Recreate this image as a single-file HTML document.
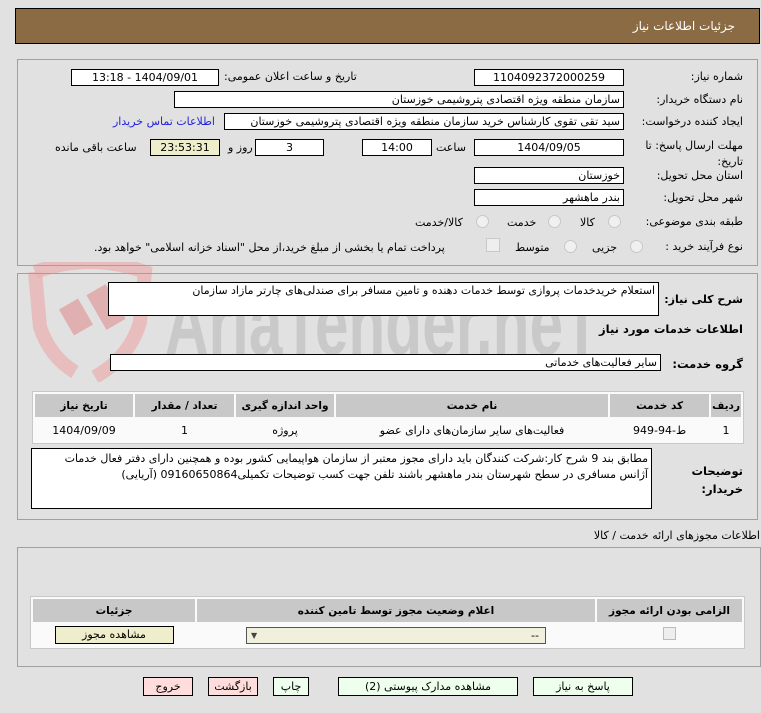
<!DOCTYPE html>
<html><head><meta charset="utf-8"><style>
body{margin:0;width:761px;height:713px;background:#e1e1e1;font-family:"DejaVu Sans","Liberation Sans",sans-serif;font-size:11px;color:#000;position:relative;overflow:hidden;direction:rtl}
.a{position:absolute;white-space:nowrap}
.in{position:absolute;background:#fff;border:1px solid #000;box-sizing:border-box;height:17px;line-height:15px;padding:0 3px;white-space:nowrap;overflow:hidden}
.c{text-align:center}
.pan{position:absolute;border:1px solid #a0a0a0;box-sizing:border-box}
.b{font-weight:bold}
table{border-collapse:separate;border-spacing:2px;position:absolute;background:#fafafa;border:1px solid #c8c8c8}
th{background:#c8c8c8;font-weight:bold;height:21px;font-size:10.5px}
td{background:#fafafa;text-align:center;height:20px}
.btn{position:absolute;border:1px solid #000;box-sizing:border-box;background:#eeffee;text-align:center;height:19px;line-height:17px}
.rad{position:absolute;width:11px;height:11px;border-radius:50%;border:1px solid #c8c8c8;background:#f0f0f0}
</style></head><body>
<div class="a" style="left:15px;top:8px;width:745px;height:36px;background:#8b6b43;border:1px solid #000;box-sizing:border-box"></div>
<div class="a" style="right:26px;top:19px;color:#fff;font-size:12px">جزئیات اطلاعات نیاز</div>

<svg class="a" style="left:20px;top:262px" width="140" height="120" viewBox="0 0 140 120"><path d="M15 10 Q70 -10 125 10 L120 60 Q110 95 75 115" fill="none" stroke="#e8b4b4" stroke-width="14" opacity=".8"/><path d="M15 10 L20 65 Q30 95 55 110" fill="none" stroke="#e8b4b4" stroke-width="14" opacity=".8"/><rect x="45" y="40" width="22" height="30" fill="#e0b0b0" transform="rotate(-30 56 55)"/><rect x="75" y="25" width="22" height="40" fill="#e0b0b0" transform="rotate(-30 86 45)"/></svg>
<svg class="a" style="left:160px;top:280px;direction:ltr" width="450" height="80"><text x="5" y="74" font-family="Liberation Sans" font-weight="bold" font-size="88" fill="#c4c4c4" opacity=".8" textLength="435" lengthAdjust="spacingAndGlyphs">AriaTender.neT</text></svg>

<div class="pan" style="left:17px;top:59px;width:741px;height:207px"></div>
<div class="a" style="right:18px;top:70px">شماره نیاز:</div>
<div class="in c" style="left:474px;top:69px;width:150px">1104092372000259</div>
<div class="a" style="left:224px;top:70px">تاریخ و ساعت اعلان عمومی:</div>
<div class="in c" style="left:71px;top:69px;width:148px">1404/09/01 - 13:18</div>
<div class="a" style="right:18px;top:93px">نام دستگاه خریدار:</div>
<div class="in" style="left:174px;top:91px;width:450px">سازمان منطقه ویژه اقتصادی پتروشیمی خوزستان</div>
<div class="a" style="right:18px;top:115px">ایجاد کننده درخواست:</div>
<div class="in" style="left:224px;top:113px;width:400px">سید تقی تقوی کارشناس خرید سازمان منطقه ویژه اقتصادی پتروشیمی خوزستان</div>
<div class="a" style="left:113px;top:115px;color:#2222dd">اطلاعات تماس خریدار</div>
<div class="a" style="right:18px;top:138px;white-space:normal;width:115px;line-height:16px">مهلت ارسال پاسخ: تا تاریخ:</div>
<div class="in c" style="left:474px;top:139px;width:150px">1404/09/05</div>
<div class="a" style="left:436px;top:141px">ساعت</div>
<div class="in c" style="left:362px;top:139px;width:70px">14:00</div>
<div class="in c" style="left:255px;top:139px;width:69px">3</div>
<div class="a" style="left:228px;top:141px">روز و</div>
<div class="in c" style="left:150px;top:139px;width:70px;background:#eeeecc">23:53:31</div>
<div class="a" style="left:55px;top:141px">ساعت باقی مانده</div>
<div class="a" style="right:18px;top:169px">استان محل تحویل:</div>
<div class="in" style="left:474px;top:167px;width:150px">خوزستان</div>
<div class="a" style="right:18px;top:191px">شهر محل تحویل:</div>
<div class="in" style="left:474px;top:189px;width:150px">بندر ماهشهر</div>
<div class="a" style="right:18px;top:215px">طبقه بندی موضوعی:</div>
<div class="rad" style="left:608px;top:215px"></div><div class="a" style="left:580px;top:216px">کالا</div>
<div class="rad" style="left:548px;top:215px"></div><div class="a" style="left:507px;top:216px">خدمت</div>
<div class="rad" style="left:476px;top:215px"></div><div class="a" style="left:415px;top:216px">کالا/خدمت</div>
<div class="a" style="right:18px;top:240px">نوع فرآیند خرید :</div>
<div class="rad" style="left:630px;top:240px"></div><div class="a" style="left:592px;top:241px">جزیی</div>
<div class="rad" style="left:564px;top:240px"></div><div class="a" style="left:515px;top:241px">متوسط</div>
<div class="a" style="left:486px;top:238px;width:12px;height:12px;border:1px solid #c8c8c8;background:#eee"></div>
<div class="a" style="left:94px;top:241px">پرداخت تمام یا بخشی از مبلغ خرید،از محل "اسناد خزانه اسلامی" خواهد بود.</div>

<div class="pan" style="left:17px;top:273px;width:741px;height:247px"></div>
<div class="a b" style="right:18px;top:293px;font-size:11px">شرح کلی نیاز:</div>
<div class="in" style="left:108px;top:282px;width:551px;height:34px;background:#fff">استعلام  خریدخدمات پروازی توسط خدمات دهنده و تامین مسافر برای صندلی‌های چارتر مازاد سازمان</div>
<div class="a b" style="right:18px;top:322px;font-size:11.5px">اطلاعات خدمات مورد نیاز</div>
<div class="a b" style="right:18px;top:357px;font-size:11.5px">گروه خدمت:</div>
<div class="in" style="left:110px;top:354px;width:551px">سایر فعالیت‌های خدماتی</div>
<table style="left:32px;top:391px;width:712px">
<tr><th style="width:27px">ردیف</th><th style="width:97px">کد خدمت</th><th>نام خدمت</th><th style="width:96px">واحد اندازه گیری</th><th style="width:97px">تعداد / مقدار</th><th style="width:96px">تاریخ نیاز</th></tr>
<tr><td>1</td><td>ط-94-949</td><td>فعالیت‌های سایر سازمان‌های دارای عضو</td><td>پروژه</td><td>1</td><td>1404/09/09</td></tr></table>
<div class="a b" style="right:18px;top:462px;font-size:11.5px;white-space:normal;width:60px;line-height:18px">توضیحات خریدار:</div>
<div class="in" style="left:31px;top:448px;width:621px;height:61px;white-space:normal;line-height:16px;padding-top:2px">مطابق بند 9 شرح کار:شرکت کنندگان باید دارای مجوز معتبر از سازمان هواپیمایی کشور   بوده و همچنین دارای دفتر فعال خدمات آژانس مسافری در سطح شهرستان بندر ماهشهر باشند تلفن جهت کسب توضیحات تکمیلی09160650864 (آریایی)</div>

<div class="a" style="right:1px;top:529px">اطلاعات مجوزهای ارائه خدمت / کالا</div>
<div class="pan" style="left:17px;top:547px;width:744px;height:120px"></div>
<table style="left:30px;top:596px;width:715px">
<tr><th style="width:143px">الزامی بودن ارائه مجوز</th><th>اعلام وضعیت مجوز توسط تامین کننده</th><th style="width:160px">جزئیات</th></tr>
<tr><td><span style="display:inline-block;width:11px;height:11px;border:1px solid #bbb;background:#eee"></span></td><td><div style="margin:0 auto;width:300px;height:17px;border:1px solid #555;background:#f0f0dc;box-sizing:border-box;text-align:right;padding-right:6px;line-height:15px;position:relative">--<span style="position:absolute;left:4px;font-size:8px;color:#444">▼</span></div></td><td><div style="margin:0 auto;width:119px;height:18px;border:1px solid #000;background:#eeeecc;box-sizing:border-box;line-height:16px">مشاهده مجوز</div></td></tr></table>

<div class="btn" style="left:533px;top:677px;width:100px">پاسخ به نیاز</div>
<div class="btn" style="left:338px;top:677px;width:180px">مشاهده مدارک پیوستی (2)</div>
<div class="btn" style="left:273px;top:677px;width:36px">چاپ</div>
<div class="btn" style="left:208px;top:677px;width:50px;background:#ffdddd">بازگشت</div>
<div class="btn" style="left:143px;top:677px;width:50px;background:#ffdddd">خروج</div>
</body></html>
